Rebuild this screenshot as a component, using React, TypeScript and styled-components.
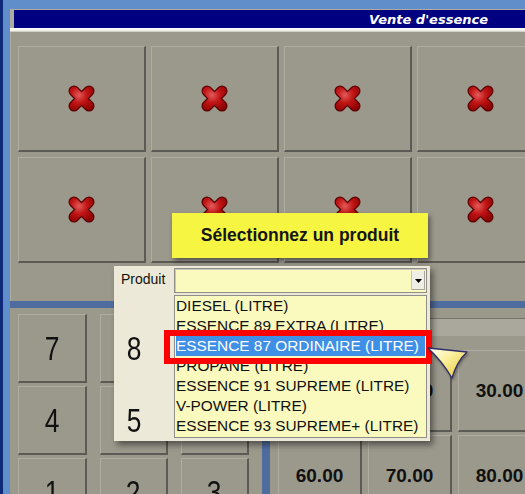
import React from "react";
import styled, { createGlobalStyle } from "styled-components";

const GlobalStyle = createGlobalStyle`
  html, body { margin: 0; padding: 0; }
  body { background: #5f8ecb; font-family: "Liberation Sans", Arial, sans-serif; }
`;

const Page = styled.div`
  position: relative;
  width: 525px;
  height: 494px;
  overflow: hidden;
  box-sizing: border-box;
  padding: 9px 0 0 10px;
  background: #5f8ecb;
  box-shadow: inset 3px 0 0 #0e2a78;
  display: flex;
  flex-direction: column;
`;

const Window = styled.div`
  flex: 1;
  min-height: 0;
  display: flex;
  flex-direction: column;
  background: #a4a297;
`;

const TitleRow = styled.div`
  padding: 1px 0 0 4px;
  background: #aeaca1;
`;

const TitleBar = styled.div`
  height: 18px;
  background: #000080;
  color: #ffffff;
  font-family: "DejaVu Sans", Verdana, sans-serif;
  font-weight: bold;
  font-style: italic;
  font-size: 13px;
  display: flex;
  align-items: center;
  justify-content: flex-end;
  padding-right: 37px;
`;

const Highlight = styled.div`
  height: 4px;
  background: linear-gradient(#ffffff, #f2f2ea 60%, #c4c2b8);
`;

const TopPanel = styled.div`
  height: 269px;
  box-sizing: border-box;
  padding: 14px 0 0 7px;
  background: #9b988c;
  overflow: hidden;
  border-left: 1px solid #aeaca1;
`;

const XGrid = styled.div`
  display: grid;
  grid-template-columns: repeat(4, 128px);
  grid-auto-rows: 106px;
  gap: 5px;
`;

const Tile = styled.div`
  box-sizing: border-box;
  background: #9b988c;
  border-top: 1px solid #afada2;
  border-left: 1px solid #afada2;
  border-right: 2px solid #5b5a54;
  border-bottom: 2px solid #5b5a54;
  display: flex;
  align-items: center;
  justify-content: center;
  color: #111111;
`;

const Band = styled.div`
  height: 7px;
  background: #4e6c9e;
`;

const BottomPanel = styled.div`
  flex: 1;
  min-height: 0;
  display: flex;
  background: #9b988c;
  overflow: hidden;
`;

const KeypadArea = styled.div`
  width: 252px;
  flex: none;
  box-sizing: border-box;
  padding: 6px 0 0 8px;
`;

const Keypad = styled.div`
  display: grid;
  grid-template-columns: 69px 68px 68px;
  grid-auto-rows: 69px;
  column-gap: 13px;
  row-gap: 3px;
`;

const KeyButton = styled(Tile)`
  font-family: "Liberation Sans", Arial, sans-serif;
`;

const Digit = styled.span`
  display: inline-block;
  font-size: 33px;
  transform: scaleX(0.8);
  line-height: 1;
`;

const VStrip = styled.div`
  width: 8px;
  flex: none;
  background: #4e6c9e;
`;

const RightPanel = styled.div`
  flex: 1;
  min-width: 0;
  overflow: hidden;
  padding: 10px 0 0 8px;
`;

const HeaderBar = styled.div`
  height: 17px;
  width: 400px;
  background: #aaa89d;
  border-top: 1px solid #77756c;
  margin-bottom: 14px;
`;

const AmountGrid = styled.div`
  display: grid;
  grid-template-columns: repeat(5, 84px);
  grid-auto-rows: 82px;
  column-gap: 6px;
  row-gap: 3px;
`;

const AmountButton = styled(Tile)`
  font-size: 19px;
  font-weight: bold;
`;

const Tooltip = styled.div`
  position: absolute;
  left: 172px;
  top: 213px;
  width: 256px;
  height: 45px;
  background: #f6f542;
  box-shadow: 2px 3px 5px rgba(0, 0, 0, 0.45);
  display: flex;
  align-items: center;
  justify-content: center;
  font-weight: bold;
  font-size: 17.5px;
  color: #151515;
`;

const Popup = styled.div`
  position: absolute;
  left: 114px;
  top: 266px;
  width: 316px;
  height: 175px;
  background: #ece9d8;
  box-shadow: 3px 4px 6px rgba(0, 0, 0, 0.45);
  display: grid;
  grid-template-columns: 60px 1fr;
`;

const Label = styled.div`
  padding: 5px 0 0 7px;
  font-size: 14px;
  color: #111111;
`;

const ComboColumn = styled.div`
  padding: 2px 3px 0 0;
  display: flex;
  flex-direction: column;
  gap: 2px;
`;

const Combo = styled.div`
  height: 25px;
  box-sizing: border-box;
  background: #fafabe;
  border: 1px solid #8f8f88;
  box-shadow: inset 1px 1px 0 #c8c8c0;
  display: flex;
  justify-content: flex-end;
  padding: 2px 1px;
`;

const DropButton = styled.div`
  width: 13px;
  background: #f0efe6;
  border-left: 1px solid #c8c6bc;
  box-shadow: inset -1px -1px 0 #a8a69c;
  display: flex;
  align-items: center;
  justify-content: center;
`;

const List = styled.div`
  height: 143px;
  box-sizing: border-box;
  background: #fafabe;
  border: 1px solid #8f8f88;
  padding: 0 1px;
  display: flex;
  flex-direction: column;
`;

const Item = styled.div<{ $selected?: boolean }>`
  height: 20px;
  line-height: 20px;
  padding-left: 0;
  font-size: 15.4px;
  white-space: nowrap;
  color: ${(p) => (p.$selected ? "#ffffff" : "#111111")};
  background: ${(p) => (p.$selected ? "#3f8fe6" : "transparent")};
`;

const GhostDigits = styled.div`
  position: absolute;
  left: -14px;
  top: 48px;
  width: 68px;
  display: grid;
  grid-auto-rows: 69px;
  row-gap: 3px;
  pointer-events: none;
`;

const GhostDigit = styled.div`
  display: flex;
  align-items: center;
  justify-content: center;
  color: #111111;
`;

const RedFrame = styled.div`
  position: absolute;
  left: 164px;
  top: 330px;
  width: 268px;
  height: 34px;
  box-sizing: border-box;
  border: 6px solid #ff0000;
`;

const Pointer = styled.svg`
  position: absolute;
  left: 424px;
  top: 344px;
  filter: drop-shadow(1px 2px 1px rgba(0, 0, 0, 0.3));
`;

const XIcon: React.FC<{ id: string }> = ({ id }) => (
  <svg width="27" height="27" viewBox="0 0 27 27">
    <defs>
      <radialGradient id={id} cx="11" cy="10" r="18" gradientUnits="userSpaceOnUse">
        <stop offset="0" stopColor="#e45a5a" />
        <stop offset="0.45" stopColor="#c01515" />
        <stop offset="1" stopColor="#8a0000" />
      </radialGradient>
    </defs>
    <g strokeLinecap="round" fill="none">
      <path d="M6 6 L21 21 M21 6 L6 21" stroke="#5a0000" strokeWidth="11" />
      <path d="M6 6 L21 21 M21 6 L6 21" stroke={`url(#${id})`} strokeWidth="8.6" />
    </g>
  </svg>
);

const products = [
  "DIESEL (LITRE)",
  "ESSENCE 89 EXTRA (LITRE)",
  "ESSENCE 87 ORDINAIRE (LITRE)",
  "PROPANE (LITRE)",
  "ESSENCE 91 SUPREME (LITRE)",
  "V-POWER (LITRE)",
  "ESSENCE 93 SUPREME+ (LITRE)",
];

const keys = ["7", "8", "9", "4", "5", "6", "1", "2", "3"];
const amounts = ["10.00", "20.00", "30.00", "40.00", "50.00", "60.00", "70.00", "80.00", "90.00", "100.00"];

export default function App() {
  return (
    <>
      <GlobalStyle />
      <Page>
        <Window>
          <TitleRow>
            <TitleBar>Vente d'essence</TitleBar>
          </TitleRow>
          <Highlight />
          <TopPanel>
            <XGrid>
              {Array.from({ length: 8 }).map((_, i) => (
                <Tile key={i}>
                  <XIcon id={`xg${i}`} />
                </Tile>
              ))}
            </XGrid>
          </TopPanel>
          <Band />
          <BottomPanel>
            <KeypadArea>
              <Keypad>
                {keys.map((k) => (
                  <KeyButton key={k}>
                    <Digit>{k}</Digit>
                  </KeyButton>
                ))}
              </Keypad>
            </KeypadArea>
            <VStrip />
            <RightPanel>
              <HeaderBar />
              <AmountGrid>
                {amounts.map((a) => (
                  <AmountButton key={a}>{a}</AmountButton>
                ))}
              </AmountGrid>
            </RightPanel>
          </BottomPanel>
        </Window>

        <Tooltip>Sélectionnez un produit</Tooltip>

        <Popup>
          <Label>Produit</Label>
          <ComboColumn>
            <Combo>
              <DropButton>
                <svg width="7" height="4" viewBox="0 0 7 4">
                  <path d="M0 0 H7 L3.5 4 Z" fill="#000" />
                </svg>
              </DropButton>
            </Combo>
            <List>
              {products.map((p, i) => (
                <Item key={p} $selected={i === 2}>
                  {p}
                </Item>
              ))}
            </List>
          </ComboColumn>
          <GhostDigits>
            <GhostDigit>
              <Digit>8</Digit>
            </GhostDigit>
            <GhostDigit>
              <Digit>5</Digit>
            </GhostDigit>
          </GhostDigits>
        </Popup>

        <RedFrame />

        <Pointer width="48" height="40" viewBox="0 0 48 40">
          <defs>
            <linearGradient id="pg" x1="0" y1="0" x2="1" y2="1">
              <stop offset="0" stopColor="#ffffff" />
              <stop offset="0.4" stopColor="#fbf1a0" />
              <stop offset="1" stopColor="#e6c230" />
            </linearGradient>
          </defs>
          <path
            d="M4 4 L43 8 Q33 17 28 34 Q18 17 4 4 Z"
            fill="url(#pg)"
            stroke="#2e2e68"
            strokeWidth="1.3"
            strokeLinejoin="round"
          />
        </Pointer>
      </Page>
    </>
  );
}
